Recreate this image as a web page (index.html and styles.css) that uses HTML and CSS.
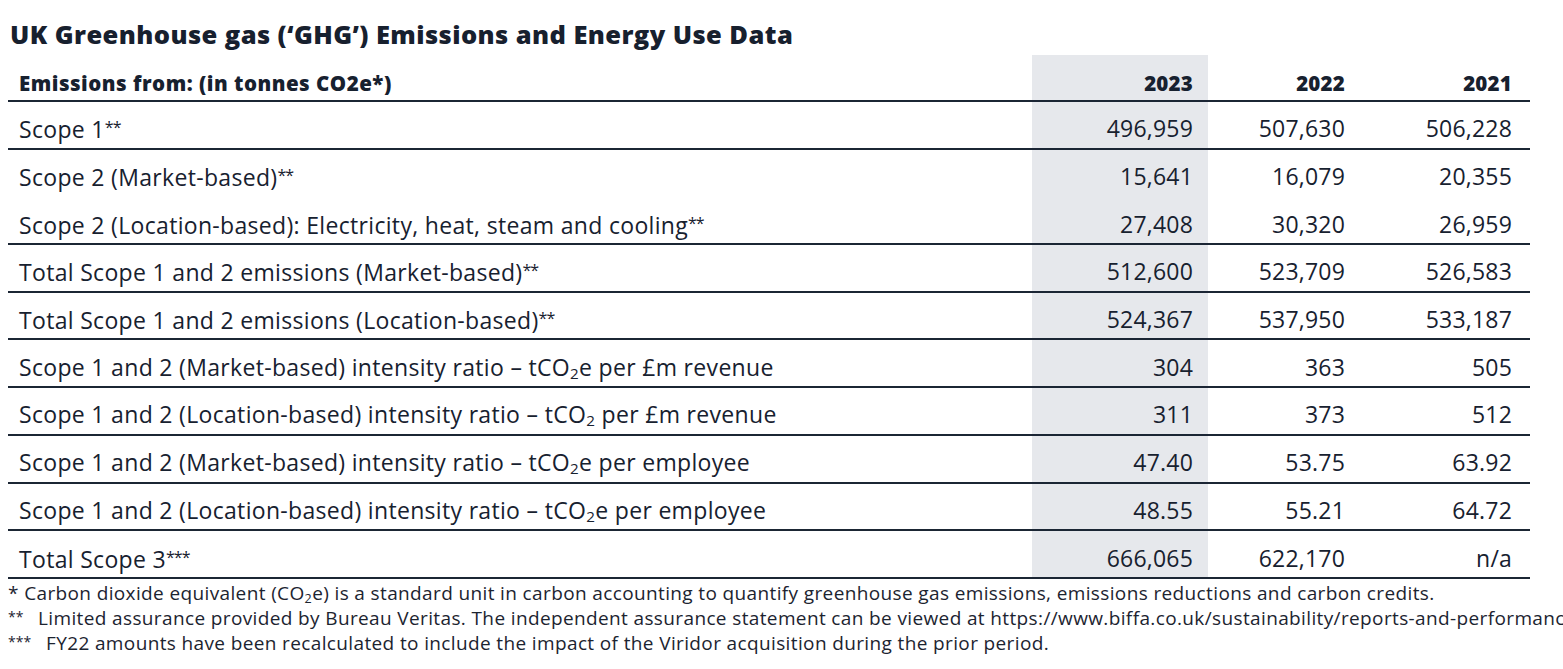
FILE: index.html
```html
<!DOCTYPE html>
<html lang="en">
<head>
<meta charset="utf-8">
<title>UK Greenhouse gas Emissions and Energy Use Data</title>
<link rel="stylesheet" href="styles.css">
</head>
<body>
<div class="page">
  <h1 class="title">UK Greenhouse gas (‘GHG’) Emissions and Energy Use Data</h1>
  <table class="ghg">
    <colgroup>
      <col class="c-label">
      <col class="c-hl">
      <col class="c-22">
      <col class="c-21">
    </colgroup>
    <thead>
      <tr>
        <th class="label">Emissions from: (in tonnes CO2e*)</th>
        <th class="num hl">2023</th>
        <th class="num">2022</th>
        <th class="num last">2021</th>
      </tr>
    </thead>
    <tbody>
      <tr><td class="label">Scope 1<span class="ast">**</span></td><td class="num hl">496,959</td><td class="num">507,630</td><td class="num last">506,228</td></tr>
      <tr class="noline"><td class="label">Scope 2 (Market-based)<span class="ast">**</span></td><td class="num hl">15,641</td><td class="num">16,079</td><td class="num last">20,355</td></tr>
      <tr><td class="label">Scope 2 (Location-based): Electricity, heat, steam and cooling<span class="ast">**</span></td><td class="num hl">27,408</td><td class="num">30,320</td><td class="num last">26,959</td></tr>
      <tr><td class="label">Total Scope 1 and 2 emissions (Market-based)<span class="ast">**</span></td><td class="num hl">512,600</td><td class="num">523,709</td><td class="num last">526,583</td></tr>
      <tr><td class="label">Total Scope 1 and 2 emissions (Location-based)<span class="ast">**</span></td><td class="num hl">524,367</td><td class="num">537,950</td><td class="num last">533,187</td></tr>
      <tr><td class="label">Scope 1 and 2 (Market-based) intensity ratio – tCO<sub>2</sub>e per £m revenue</td><td class="num hl">304</td><td class="num">363</td><td class="num last">505</td></tr>
      <tr><td class="label">Scope 1 and 2 (Location-based) intensity ratio – tCO<sub>2</sub> per £m revenue</td><td class="num hl">311</td><td class="num">373</td><td class="num last">512</td></tr>
      <tr><td class="label">Scope 1 and 2 (Market-based) intensity ratio – tCO<sub>2</sub>e per employee</td><td class="num hl">47.40</td><td class="num">53.75</td><td class="num last">63.92</td></tr>
      <tr><td class="label">Scope 1 and 2 (Location-based) intensity ratio – tCO<sub>2</sub>e per employee</td><td class="num hl">48.55</td><td class="num">55.21</td><td class="num last">64.72</td></tr>
      <tr class="lastrow"><td class="label">Total Scope 3<span class="ast">***</span></td><td class="num hl">666,065</td><td class="num">622,170</td><td class="num last">n/a</td></tr>
    </tbody>
  </table>
  <div class="notes">
    <p class="note">* Carbon dioxide equivalent (CO<sub>2</sub>e) is a standard unit in carbon accounting to quantify greenhouse gas emissions, emissions reductions and carbon credits.</p>
    <p class="note"><span class="mark m2">**</span>Limited assurance provided by Bureau Veritas. The independent assurance statement can be viewed at https://www.biffa.co.uk/sustainability/reports-and-performance</p>
    <p class="note"><span class="mark m3">***</span>FY22 amounts have been recalculated to include the impact of the Viridor acquisition during the prior period.</p>
  </div>
</div>
</body>
</html>
```

FILE: styles.css
```css
html, body {
  margin: 0;
  padding: 0;
  background: #ffffff;
}

body {
  font-family: "Open Sans", "Liberation Sans", sans-serif;
  color: #17212f;
  overflow: hidden;
}

.page {
  width: 1563px;
  height: 669px;
  overflow: hidden;
}

.title {
  margin: 0;
  padding: 19px 0 0 10px;
  height: 36px;
  font-size: 25.5px;
  line-height: 30px;
  font-weight: 800;
  letter-spacing: 0.42px;
  color: #17202e;
}

.ghg {
  margin-left: 8px;
  width: 1522px;
  border-collapse: collapse;
  table-layout: fixed;
}

.c-label { width: 1024px; }
.c-hl { width: 176px; }
.c-22 { width: 155px; }
.c-21 { width: 167px; }

.ghg th {
  height: 46px;
  box-sizing: border-box;
  padding: 10px 0 0 11px;
  font-size: 20.5px;
  font-weight: 800;
  letter-spacing: 0.5px;
  text-align: left;
  vertical-align: middle;
  border-bottom: 2px solid #1b2634;
}

.ghg td {
  height: 47.7px;
  box-sizing: border-box;
  padding: 7px 0 0 11px;
  font-size: 23px;
  line-height: 30px;
  font-weight: 400;
  letter-spacing: 0.32px;
  vertical-align: middle;
  border-bottom: 2px solid #1b2634;
  white-space: nowrap;
}

.ghg tr.noline td {
  border-bottom-color: transparent;
}

.ghg .num {
  text-align: right;
  padding-right: 18px;
  padding-left: 0;
  letter-spacing: 0.2px;
}

.ghg .num.hl {
  padding-right: 15px;
  background: #e6e8ec;
}

.ghg .num.last {
  padding-right: 18px;
}

.ghg tr.lastrow td {
  padding-top: 8px;
}

.ast {
  font-size: 16px;
  vertical-align: 5px;
  letter-spacing: -1px;
}

sub {
  font-size: 0.66em;
  vertical-align: -3px;
  line-height: 0;
}

.notes {
  padding-left: 8px;
  padding-top: 2px;
}

.note {
  margin: 0;
  font-size: 19px;
  line-height: 24px;
  letter-spacing: 0.37px;
  white-space: nowrap;
  color: #1c2430;
}

.note .mark {
  display: inline-block;
  font-size: 14px;
  vertical-align: 3px;
  letter-spacing: 0;
}

.note .m2 { width: 30px; }
.note .m3 { width: 38px; }
```
